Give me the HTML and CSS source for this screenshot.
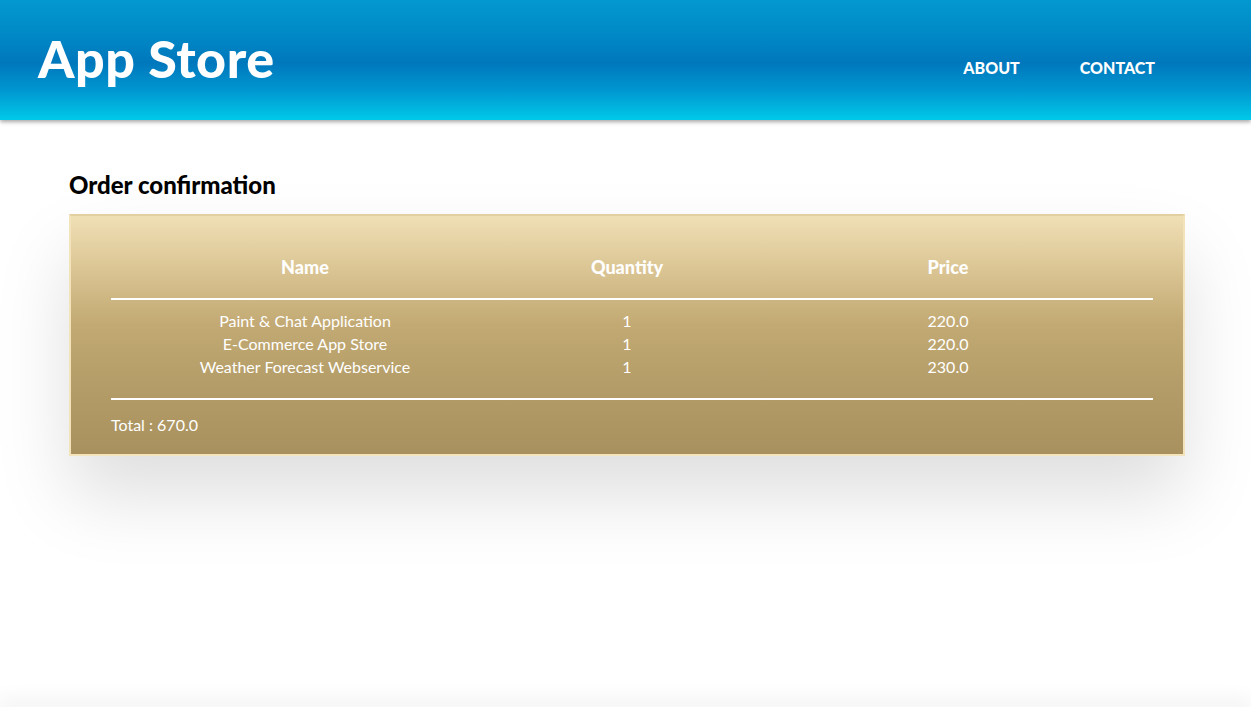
FILE: index.html
```html
<!DOCTYPE html>
<html>
<head>
<meta charset="utf-8">
<link rel="stylesheet" href="styles.css">
</head>
<body>
<header class="topbar">
  <div class="brand">App Store</div>
  <nav class="nav">
    <a class="nav-link" href="#">ABOUT</a>
    <a class="nav-link" href="#">CONTACT</a>
  </nav>
</header>
<main class="main">
  <h2 class="page-title">Order confirmation</h2>
  <section class="order-box">
    <div class="row head">
      <div class="cell">Name</div>
      <div class="cell">Quantity</div>
      <div class="cell">Price</div>
    </div>
    <hr class="rule">
    <div class="items">
      <div class="row item">
        <div class="cell">Paint &amp; Chat Application</div>
        <div class="cell">1</div>
        <div class="cell">220.0</div>
      </div>
      <div class="row item">
        <div class="cell">E-Commerce App Store</div>
        <div class="cell">1</div>
        <div class="cell">220.0</div>
      </div>
      <div class="row item">
        <div class="cell">Weather Forecast Webservice</div>
        <div class="cell">1</div>
        <div class="cell">230.0</div>
      </div>
    </div>
    <hr class="rule">
    <div class="total">Total : 670.0</div>
  </section>
</main>
<footer class="footer"></footer>
</body>
</html>
```
FILE: styles.css
```css
* { box-sizing: border-box; }
html { overflow: hidden; }
html, body { margin: 0; padding: 0; }
body {
  font-family: "Lato", "Open Sans", sans-serif;
  background: #ffffff;
  display: flex;
  flex-direction: column;
  height: 100vh;
}
.topbar {
  height: 120px;
  flex: none;
  display: flex;
  align-items: center;
  justify-content: space-between;
  padding: 0 96px 0 38px;
  background: linear-gradient(to bottom, #0399cf 0%, #0085c4 35%, #0077bc 52%, #0096d0 75%, #00c9e9 100%);
  box-shadow: 0 2px 4px rgba(0,0,0,0.35);
  position: relative;
  z-index: 2;
}
.brand {
  color: #fff;
  font-size: 52px;
  font-weight: 900;
  letter-spacing: 0.5px;
  margin-top: -4px;
}
.nav {
  display: flex;
  gap: 60px;
  margin-top: 14px;
}
.nav-link {
  color: #fff;
  text-decoration: none;
  font-weight: 900;
  font-size: 16px;
}
.main {
  flex: 1;
  padding: 50px 66px 0 69px;
}
.page-title {
  margin: 0 0 14px 0;
  font-size: 24px;
  font-weight: 900;
  color: #000;
  line-height: 30px;
}
.order-box {
  background: linear-gradient(to bottom, #f0e0b6 0%, #dbc594 22%, #c3aa74 45%, #b49d68 70%, #a8915e 100%);
  border-top: 2px solid #e2cfa2;
  border-left: 2px solid #f3e3bb;
  border-right: 2px solid #f3e3bb;
  border-bottom: 2px solid #f4e4bc;
  padding: 37px 30px 19px 40px;
  box-shadow: 0 40px 70px rgba(0,0,0,0.13);
  color: #fff;
}
.row {
  display: grid;
  grid-template-columns: 388px 256px 386px 1fr;
  text-align: center;
}
.head {
  font-weight: 900;
  font-size: 18px;
  line-height: 28px;
}
.rule {
  border: 0;
  border-top: 2px solid #fff;
  margin: 17px 0 0 0;
}
.items {
  padding: 9px 0 20px 0;
}
.item {
  font-size: 16px;
  line-height: 23px;
  font-weight: 400;
}
.items + .rule { margin-top: 0; }
.total {
  font-size: 16px;
  font-weight: 400;
  margin-top: 15px;
  line-height: 20px;
}
.footer {
  height: 2px;
  flex: none;
  box-shadow: 0 0 22px 2px rgba(0,0,0,0.16);
}
```
